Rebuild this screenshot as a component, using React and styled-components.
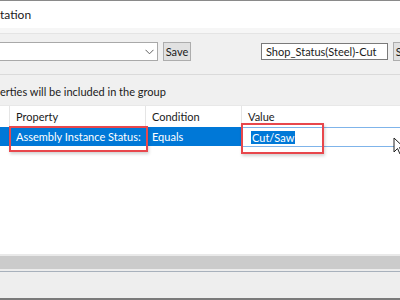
import styled, { createGlobalStyle } from "styled-components";

const GlobalStyle = createGlobalStyle`
  html, body {
    margin: 0;
    padding: 0;
    background: #ffffff;
  }
  body {
    font-family: Lato, "Noto Sans", sans-serif;
    font-size: 11px;
    color: #1a1a1a;
  }
`;

const Window = styled.div`
  position: relative;
  width: 400px;
  height: 300px;
  overflow: hidden;
  display: flex;
  flex-direction: column;
  background: #f0f0f0;
  border-top: 1px solid #8a8a8a;
  border-bottom: 2px solid #7a7a7a;
  box-sizing: border-box;
`;

const TitleBar = styled.div`
  height: 27px;
  display: flex;
  align-items: center;
  background: #ffffff;
  font-size: 12px;
  color: #1a1a1a;
  white-space: nowrap;
`;

const TitleBand = styled.div`
  height: 5px;
  background: #f6f6f6;
  border-bottom: 1px solid #e4e4e4;
`;

const Toolbar = styled.div`
  display: flex;
  align-items: center;
  padding-top: 8px;
  height: 19px;
  box-sizing: content-box;
  white-space: nowrap;
`;

const Combo = styled.div`
  margin-left: -4px;
  width: 162px;
  height: 19px;
  flex-shrink: 0;
  box-sizing: border-box;
  background: #ffffff;
  border: 1px solid #a9a9a9;
  display: flex;
  align-items: center;
  justify-content: flex-end;
  padding-right: 3px;
`;

const Button = styled.div`
  margin-left: ${(p) => p.$gap}px;
  width: 28px;
  height: 19px;
  box-sizing: border-box;
  background: #e1e1e1;
  border: 1px solid #adadad;
  display: flex;
  align-items: center;
  justify-content: center;
  flex-shrink: 0;
`;

const TextBox = styled.div`
  margin-left: 70px;
  width: 127px;
  height: 17px;
  box-sizing: border-box;
  background: #ffffff;
  border: 1px solid #7a7a7a;
  display: flex;
  align-items: center;
  padding-left: 4px;
  flex-shrink: 0;
`;

const Separator = styled.div`
  margin-top: 13px;
  height: 1px;
  background: #dadada;
`;

const Hint = styled.div`
  height: 30px;
  display: flex;
  align-items: center;
  padding-top: 2px;
  box-sizing: border-box;
  white-space: nowrap;
`;

const Grid = styled.div`
  flex: 1;
  background: #ffffff;
  display: grid;
  grid-template-columns: 10px 136px 96px 1fr;
  grid-template-rows: 20px 21px 1fr;
  border-top: 1px solid #e8e8e8;
  white-space: nowrap;
`;

const HeaderCell = styled.div`
  display: flex;
  align-items: center;
  padding-left: 6px;
  border-right: ${(p) => (p.$last ? "none" : "1px solid #e5e5e5")};
`;

const Cell = styled.div`
  display: flex;
  align-items: center;
  padding-left: 6px;
  background: ${(p) => (p.$selected ? "#0078d7" : "#ffffff")};
  color: ${(p) => (p.$selected ? "#ffffff" : "#1a1a1a")};
  margin: 1px 0;
  overflow: hidden;
`;

const EditCell = styled.div`
  display: flex;
  align-items: center;
  padding-left: 8px;
  margin: 1px 0 0 1px;
  border-top: 1px solid #7fb4ea;
  border-bottom: 1px solid #7fb4ea;
  background: #ffffff;
`;

const SelectedText = styled.span`
  background: #0078d7;
  color: #ffffff;
  line-height: 13px;
  padding: 0 1px;
`;

const Filler = styled.div`
  grid-column: 1 / -1;
`;

const ScrollBar = styled.div`
  height: 13px;
  background: #cbcbcb;
  border-top: 2px solid #e9e9e9;
  border-bottom: 2px solid #ececec;
  box-shadow: 0 1px 0 #a8b1bc;
  margin-bottom: 1px;
`;

const Footer = styled.div`
  height: 26px;
  background: #eeeeee;
`;

const Callout = styled.div`
  position: absolute;
  left: ${(p) => p.$x}px;
  top: ${(p) => p.$y}px;
  width: ${(p) => p.$w}px;
  height: ${(p) => p.$h}px;
  border: 2px solid #e8474c;
  box-sizing: border-box;
  box-shadow: 1px 2px 3px rgba(0, 0, 0, 0.18);
`;

const Pointer = styled.svg`
  position: absolute;
  left: 393px;
  top: 136px;
`;

export default function App() {
  return (
    <>
      <GlobalStyle />
      <Window>
        <TitleBar>tation</TitleBar>
        <TitleBand />
        <Toolbar>
          <Combo>
            <svg width="9" height="6" viewBox="0 0 9 6">
              <path d="M0.5 0.8 L4.5 4.8 L8.5 0.8" fill="none" stroke="#606060" strokeWidth="1" />
            </svg>
          </Combo>
          <Button $gap={5}>Save</Button>
          <TextBox>Shop_Status(Steel)-Cut</TextBox>
          <Button $gap={5}>Save</Button>
        </Toolbar>
        <Separator />
        <Hint>erties will be included in the group</Hint>
        <Grid>
          <HeaderCell />
          <HeaderCell>Property</HeaderCell>
          <HeaderCell>Condition</HeaderCell>
          <HeaderCell $last>Value</HeaderCell>
          <Cell $selected />
          <Cell $selected>Assembly Instance Status:</Cell>
          <Cell $selected>Equals</Cell>
          <EditCell>
            <SelectedText>Cut/Saw</SelectedText>
          </EditCell>
          <Filler />
        </Grid>
        <ScrollBar />
        <Footer />
        <Callout $x={9} $y={125} $w={139} $h={26} />
        <Callout $x={241} $y={122} $w={83} $h={31} />
        <Pointer width="12" height="18" viewBox="0 0 12 18">
          <path d="M1 1 L1 15 L4.5 11.5 L7 17 L9 16 L6.5 10.5 L11 10.5 Z" fill="#ffffff" stroke="#222222" strokeWidth="1" />
        </Pointer>
      </Window>
    </>
  );
}
